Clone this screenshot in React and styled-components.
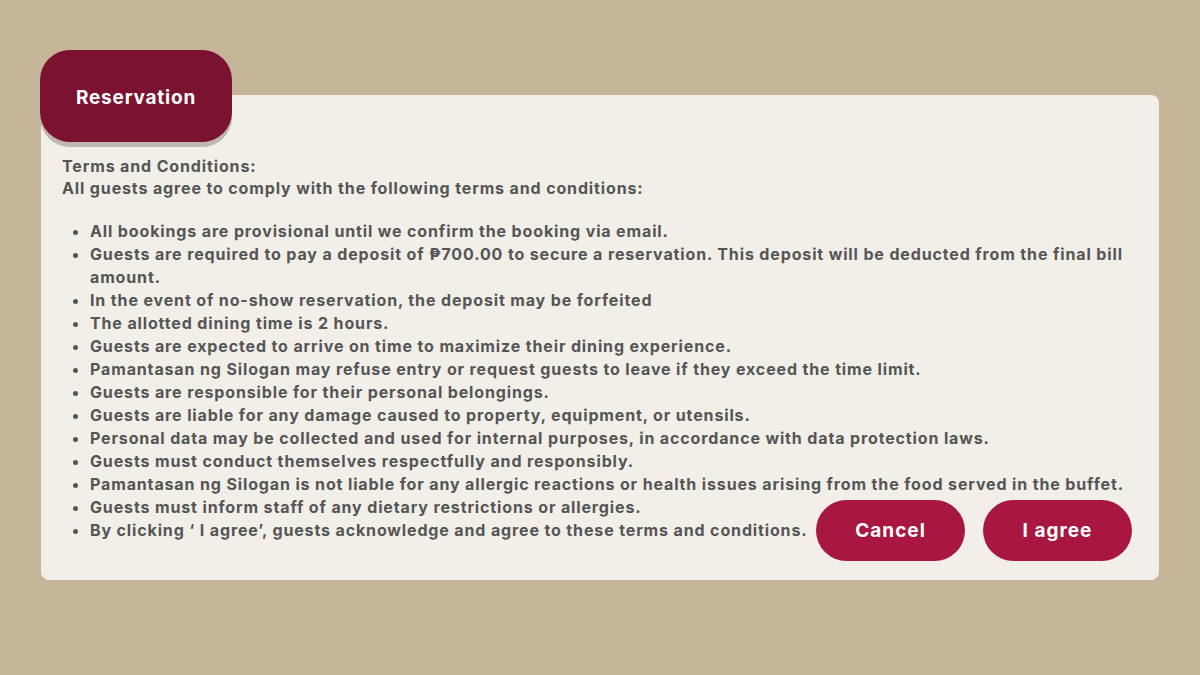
import React from 'react';
import styled, { createGlobalStyle } from 'styled-components';

const GlobalStyle = createGlobalStyle`
    html, body {
        margin: 0;
        padding: 0;
        background: #c5b699;
        font-family: Inter, "Open Sans", sans-serif;
    }
`;

const Page = styled.div`
    width: 1200px;
    height: 675px;
    box-sizing: border-box;
    padding: 95px 41px 0 41px;
`;

const Frame = styled.div`
    position: relative;
`;

const Tab = styled.div`
    position: absolute;
    left: -1px;
    top: -45px;
    width: 192px;
    height: 92px;
    padding-top: 2px;
    box-sizing: border-box;
    border-radius: 30px;
    background: #7b1230;
    box-shadow: 0 5px 0 #bdb8b1;
    display: flex;
    align-items: center;
    justify-content: center;
    color: #fff;
    font-weight: 700;
    font-size: 19px;
    letter-spacing: 0.8px;
`;

const Card = styled.div`
    height: 485px;
    box-sizing: border-box;
    background: #f2efe9;
    border-radius: 8px;
    padding: 60px 33px 0 21px;
    color: #555;
    font-size: 16px;
    font-weight: 700;
    line-height: 23px;
    letter-spacing: 0.86px;
`;

const Heading = styled.p`
    margin: 0 0 21px;
    line-height: 22px;
`;

const List = styled.ul`
    margin: 0;
    padding-left: 28px;
`;

const Actions = styled.div`
    position: absolute;
    right: 27px;
    bottom: 19px;
    display: flex;
    gap: 18px;
`;

const Button = styled.button`
    width: 149px;
    height: 61px;
    border: none;
    border-radius: 31px;
    background: ${(p) => p.color || '#a8173f'};
    color: #fff;
    font-family: inherit;
    font-size: 19px;
    font-weight: 700;
    letter-spacing: 1px;
    cursor: pointer;
`;

const terms = [
    'All bookings are provisional until we confirm the booking via email.',
    'Guests are required to pay a deposit of ₱700.00 to secure a reservation. This deposit will be deducted from the final bill amount.',
    'In the event of no-show reservation, the deposit may be forfeited',
    'The allotted dining time is 2 hours.',
    'Guests are expected to arrive on time to maximize their dining experience.',
    'Pamantasan ng Silogan may refuse entry or request guests to leave if they exceed the time limit.',
    'Guests are responsible for their personal belongings.',
    'Guests are liable for any damage caused to property, equipment, or utensils.',
    'Personal data may be collected and used for internal purposes, in accordance with data protection laws.',
    'Guests must conduct themselves respectfully and responsibly.',
    'Pamantasan ng Silogan is not liable for any allergic reactions or health issues arising from the food served in the buffet.',
    'Guests must inform staff of any dietary restrictions or allergies.',
    'By clicking \u2018 I agree\u2019, guests acknowledge and agree to these terms and conditions.',
];

const App = () => {
    return (
        <>
            <GlobalStyle />
            <Page>
                <Frame>
                    <Tab>Reservation</Tab>
                    <Card>
                        <Heading>
                            Terms and Conditions:
                            <br />
                            All guests agree to comply with the following terms and conditions:
                        </Heading>
                        <List>
                            {terms.map((t) => (
                                <li key={t}>{t}</li>
                            ))}
                        </List>
                    </Card>
                    <Actions>
                        <Button>Cancel</Button>
                        <Button>I agree</Button>
                    </Actions>
                </Frame>
            </Page>
        </>
    );
};

export default App;
